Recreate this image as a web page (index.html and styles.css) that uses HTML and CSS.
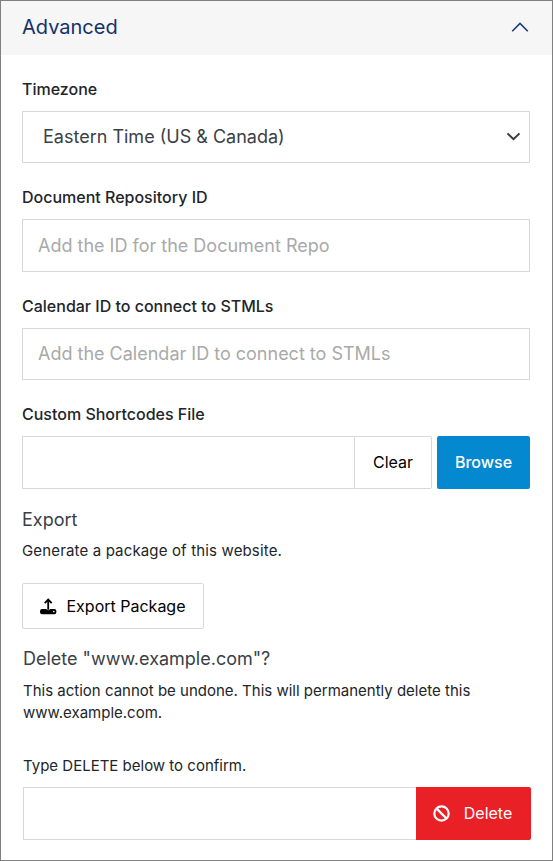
FILE: index.html
```html
<!DOCTYPE html>
<html lang="en">
<head>
<meta charset="utf-8">
<title>Advanced</title>
<link rel="stylesheet" href="styles.css">
</head>
<body>
<section class="panel">
  <header class="panel-header">
    <h2 class="panel-title"><span>Advanced</span></h2>
    <svg class="collapse" width="18" height="12" viewBox="0 0 18 12"><path d="M1.2 10.2 9 2.4l7.8 7.8"/></svg>
  </header>
  <form class="panel-body">
    <div class="field">
      <label class="label" for="tz">Timezone</label>
      <div class="select-wrap">
        <select id="tz" class="input select"><option>Eastern Time (US &amp; Canada)</option></select>
        <svg class="chevron" width="15" height="9" viewBox="0 0 15 9"><path d="M1.5 1.4l6 5.8 6-5.8"/></svg>
      </div>
    </div>
    <div class="field repo">
      <label class="label" for="repo">Document Repository ID</label>
      <input id="repo" class="input tall" placeholder="Add the ID for the Document Repo">
    </div>
    <div class="field">
      <label class="label" for="cal">Calendar ID to connect to STMLs</label>
      <input id="cal" class="input raised" placeholder="Add the Calendar ID to connect to STMLs">
    </div>
    <div class="field file">
      <label class="label" for="file">Custom Shortcodes File</label>
      <div class="row">
        <input id="file" class="input tall joined">
        <button type="button" class="button clear">Clear</button>
        <button type="button" class="button browse">Browse</button>
      </div>
    </div>
    <section class="export">
      <h3 class="heading">Export</h3>
      <p class="text">Generate a package of this website.</p>
      <button type="button" class="button export-button">
        <svg width="17" height="17" viewBox="0 0 17 17"><path class="arrow" d="M8.2 11.8V1.7M4.7 5.2l3.5-3.6 3.5 3.6"/><path class="tray" fill-rule="evenodd" d="M2.2 11h4.2a1.9 1.9 0 0 0 3.6 0h4.2a2.2 2.2 0 0 1 2.2 2.2v.8a2.2 2.2 0 0 1-2.2 2.2h-12A2.2 2.2 0 0 1 0 14v-.8A2.2 2.2 0 0 1 2.2 11zM13.8 12.8a.8.8 0 1 0 0 1.6.8.8 0 0 0 0-1.6z"/></svg>
        <span>Export Package</span>
      </button>
    </section>
    <section class="delete">
      <h3 class="heading">Delete "www.example.com"?</h3>
      <p class="text">This action cannot be undone. This will permanently delete this www.example.com.</p>
      <label class="text confirm" for="confirm">Type DELETE below to confirm.</label>
      <div class="row">
        <input id="confirm" class="input tall joined">
        <button type="button" class="button delete-button">
          <svg width="17" height="17" viewBox="0 0 17 17"><circle cx="8.5" cy="8.5" r="7.2"/><path d="M3.4 3.4l10.2 10.2"/></svg>
          <span>Delete</span>
        </button>
      </div>
    </section>
  </form>
</section>
</body>
</html>
```
FILE: styles.css
```css
* {
  box-sizing: border-box;
}

body {
  margin: 0;
  background: #fff;
  color: #212529;
  font-family: Inter, "Liberation Sans", sans-serif;
}

.panel {
  height: 861px;
  border: 1px solid #808080;
}

.panel-header {
  display: flex;
  align-items: center;
  justify-content: space-between;
  height: 54px;
  padding: 0 23px 2px 21px;
  background: #f6f6f6;
}

.panel-title {
  margin: 0;
  color: #14316b;
  font-size: 20px;
  font-weight: 400;
  line-height: 28px;
}

.collapse path {
  fill: none;
  stroke: #1b3c78;
  stroke-width: 1.6;
}

.panel-body {
  padding: 23px 22px 0 21px;
}

.label {
  display: block;
  height: 33px;
  font-size: 16px;
  font-weight: 500;
  line-height: 22px;
}

.field {
  height: 108px;
}

.repo {
  height: 109px;
}

.file {
  height: 85px;
}

.select-wrap {
  position: relative;
}

.input {
  display: block;
  width: 100%;
  height: 52px;
  padding: 0 15px;
  border: 1px solid #d6d8d9;
  border-radius: 0;
  outline: 0;
  background: #fff;
  color: #3a4046;
  font: 400 18px Inter, "Liberation Sans", sans-serif;
}

.input::placeholder {
  color: #a9a9a9;
  opacity: 1;
}

.select {
  padding-bottom: 2px;
  padding-left: 20px;
  appearance: none;
}

.raised {
  padding-bottom: 2px;
}

.chevron {
  position: absolute;
  top: 21px;
  right: 9px;
  fill: none;
  stroke: #343a40;
  stroke-width: 2;
}

.tall {
  height: 53px;
}

.row {
  display: flex;
}

.joined {
  flex: 1;
  min-width: 0;
  border-right: 0;
}

.button {
  display: flex;
  flex: none;
  align-items: center;
  justify-content: center;
  height: 53px;
  padding: 0 0 2px;
  border: 1px solid #d6d8d9;
  border-radius: 2px;
  background: #fff;
  color: #000;
  font: 400 16px Inter, "Liberation Sans", sans-serif;
}

.clear {
  width: 78px;
  border-radius: 0 2px 2px 0;
}

.browse {
  width: 93px;
  margin-left: 5px;
  border: 0;
  background: #0488d0;
  color: #fff;
  font-weight: 500;
}

.heading {
  margin: 0;
  color: #3a4046;
  font-size: 18px;
  font-weight: 400;
  line-height: 24px;
}

.text {
  margin: 0;
  font-size: 15px;
  font-weight: 400;
  line-height: 22px;
}

.export {
  padding-top: 20px;
}

.export .text {
  margin-top: 8px;
  letter-spacing: 0.15px;
}

.export-button {
  gap: 9px;
  width: 182px;
  height: 46px;
  margin-top: 21px;
  padding: 0;
}

.export-button svg {
  margin-left: -1px;
}

.export-button span {
  margin-left: 1px;
}

.arrow {
  fill: none;
  stroke: #000;
  stroke-width: 1.8;
}

.delete {
  margin: 18px -1px 0 1px;
}

.delete .text {
  margin-top: 9px;
}

.delete .confirm {
  display: block;
  height: 32px;
  margin-top: 31px;
}

.delete-button {
  gap: 14px;
  width: 115px;
  padding: 0 2px 1px 0;
  border: 0;
  border-radius: 0 2px 2px 0;
  background: #e92026;
  color: #fff;
}

.delete-button svg {
  fill: none;
  stroke: #fff;
  stroke-width: 2.2;
}
```
